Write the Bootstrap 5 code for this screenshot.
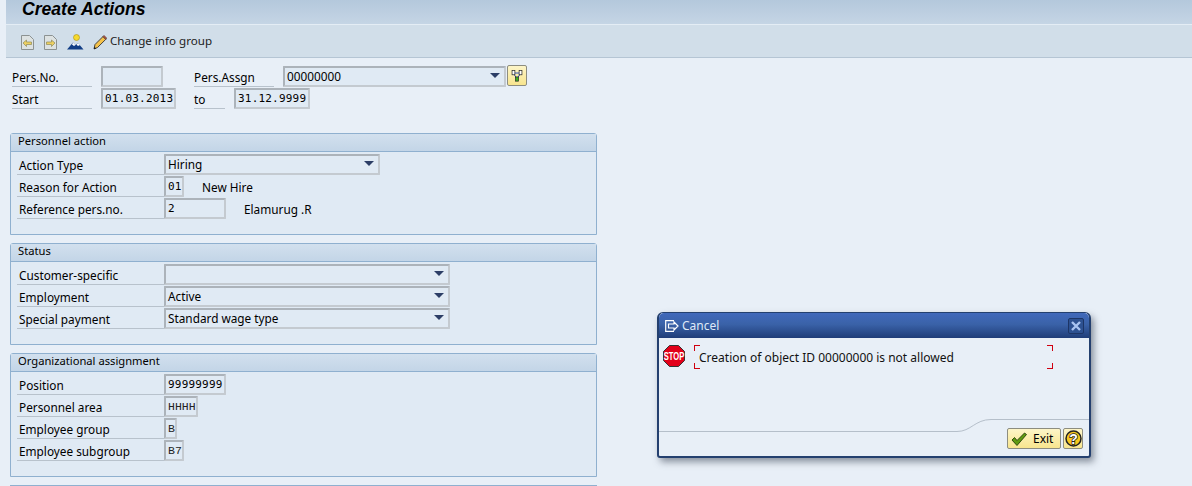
<!DOCTYPE html>
<html lang="en">
<head>
  <meta charset="UTF-8" />
  <title>Create Actions</title>
  <link href="https://cdn.jsdelivr.net/npm/bootstrap@5.3.3/dist/css/bootstrap.min.css" rel="stylesheet" />
  <style>
    html, body { height: 486px; overflow: hidden; }
    body {
      background: #e8eff7;
      color: #000;
      font: 11.8px/14px Tahoma, "Noto Sans", "Liberation Sans", sans-serif;
      position: relative;
    }
    .sap-title {
      height: 25px;
      margin-left: 6px;
      background: linear-gradient(#b4c8dc, #c5d5e5);
      border-bottom: 1px solid #e4edf5;
    }
    .sap-title h1 {
      font: italic bold 17.6px/18px "Liberation Sans", Arial, sans-serif;
      margin: 0 0 0 16px;
    }
    .sap-toolbar {
      height: 33px;
      margin-left: 6px;
      background: #d1dee9;
      border-bottom: 1px solid #b5c5d4;
      padding: 2px 0 0 15px;
      gap: 10px;
    }
    .tool-pencil { margin-left: -1px; }
    .tool-text { margin: 0 0 2px -7px; font-size: 11.6px; color: #1c1c1c; }
    .sap-head { padding: 8px 0 0 12px; height: 75px; }
    .sap-row { height: 22px; }
    .sap-label {
      height: 21px;
      border-bottom: 1px solid #b8c2cc;
      line-height: 23px;
      flex: none;
    }
    .side-text { line-height: 23px; }
    .fld {
      height: 21px;
      flex: none;
      background: #e0eaf4;
      border: 2px solid #acb3ba;
      border-right-color: #c4cad0;
      border-bottom-color: #c4cad0;
      border-radius: 1px;
      font: 11px/17px "DejaVu Sans Mono", "Liberation Mono", monospace;
      padding-left: 2px;
      letter-spacing: .2px;
      white-space: nowrap;
      overflow: hidden;
    }
    .fld-txt { font: 11.8px/17px Tahoma, "Noto Sans", "Liberation Sans", sans-serif; letter-spacing: 0; }
    .fld-serif { font: 11.5px/17px "Liberation Mono", monospace; letter-spacing: 0; color: #222; }
    .fld-drop { position: relative; padding-right: 16px; }
    .fld-drop::after {
      content: "";
      position: absolute;
      right: 4px;
      top: 5px;
      border-left: 5px solid transparent;
      border-right: 5px solid transparent;
      border-top: 5px solid #2c3e66;
    }
    .lw-80 { width: 80px; }
    .lw-pers { width: 80px; margin-left: 31px; }
    .lw-to { width: 31px; margin-left: 18px; }
    .fw-13 { width: 13px; }
    .fw-20 { width: 20px; }
    .fw-34 { width: 34px; }
    .fw-62 { width: 62px; }
    .fw-216 { width: 216px; }
    .fw-286 { width: 286px; }
    .fld-persno { width: 62px; margin-left: 9px; }
    .fld-start { width: 75px; margin-left: 9px; }
    .fld-to { width: 76px; margin-left: 9px; }
    .fld-assgn { width: 223px; margin-left: 9px; }
    .txt-hire { margin-left: 18px; }
    .txt-name { margin-left: 18px; }
    .btn-tree {
      width: 20px;
      height: 23px;
      margin: -1px 0 0 1px;
      padding: 0;
    }
    .sap-group {
      width: 587px;
      margin-left: 10px;
      background: #e0eaf4;
      border: 1px solid #8fb0cf;
      border-radius: 3px 3px 0 0;
      margin-bottom: 8px;
    }
    .sap-group-head {
      height: 18px;
      background: linear-gradient(#d2e0ee, #c3d5e7);
      border-bottom: 1px solid #8fb0cf;
      padding-left: 7px;
      line-height: 14px;
      font-size: 11.2px;
    }
    .sap-group-body { padding: 2px 0 14px 6px; }
    .sap-group-body .sap-label { width: 147px; padding-left: 2px; }
    .w-actions { height: 102px; }
    .w-org { height: 124px; }
    .sap-next {
      height: 3px;
      margin-left: 10px;
      width: 587px;
      background: #c3d5e7;
      border-top: 1px solid #8fb0cf;
    }
    .sap-dialog {
      position: absolute;
      left: 657px;
      top: 312px;
      width: 434px;
      height: 146px;
      background: #e8eff7;
      border: 2px solid #24406f;
      border-top-width: 1px;
      border-radius: 6px 6px 3px 3px;
      box-shadow: 3px 4px 7px rgba(60, 70, 85, .55);
      font-size: 12px;
    }
    .sap-dialog-title {
      height: 25px;
      background: linear-gradient(#4169bb, #3a62a8 45%, #1f3d78);
      border-radius: 5px 5px 0 0;
      color: #dfe9f8;
      padding-left: 6px;
      gap: 3px;
      font-size: 12px;
    }
    .dlg-close {
      margin-left: auto;
      margin-right: 5px;
      width: 16px;
      height: 16px;
      background: #2d5191;
      border: 1px solid #1d3566;
      border-radius: 2px;
    }
    .msg-area { padding: 7px 0 0 4px; height: 60px; }
    .msg-box {
      position: relative;
      margin-left: 9px;
      width: 359px;
      height: 24px;
      padding-left: 5px;
      line-height: 25px;
      color: #111;
    }
    .brk { position: absolute; width: 6px; height: 6px; border: 0 solid #d00010; }
    .brk-tl { left: 0; top: 0; border-width: 1px 0 0 1px; }
    .brk-bl { left: 0; bottom: 0; border-width: 0 0 1px 1px; }
    .brk-tr { right: 0; top: 0; border-width: 1px 1px 0 0; }
    .brk-br { right: 0; bottom: 0; border-width: 0 1px 1px 0; }
    .dlg-curve { position: absolute; left: 0; top: 105px; }
    .dlg-btns { position: absolute; right: 6px; bottom: 7px; gap: 2px; }
    .sap-btn {
      height: 21px;
      background: linear-gradient(#fdf5c8, #f8e58e);
      border: 1px solid #8d8d80;
      border-radius: 2px;
      padding: 0 3px;
    }
    .btn-exit { width: 54px; gap: 6px; }
    .btn-help { width: 20px; padding: 0; justify-content: center; }
  </style>
</head>
<body>

<div class="sap-title"><h1>Create Actions</h1></div>

<div class="sap-toolbar d-flex align-items-center">
  <svg width="13" height="15" viewBox="0 0 13 15"><path d="M.5.5H8.500L12.500 4.500V14.500H.5Z" fill="#dde2e2" stroke="#8c9292"/><path d="M2 8l3.500-3V7h5v2.500h-5V11.500Z" fill="#eed060" stroke="#8e8a58" stroke-width=".7"/></svg>
  <svg width="13" height="15" viewBox="0 0 13 15"><path d="M.5.5H8.500L12.500 4.500V14.500H.5Z" fill="#dde2e2" stroke="#8c9292"/><path d="M11 8 7.500 5V7h-5v2.500h5V11.500Z" fill="#eed060" stroke="#8e8a58" stroke-width=".7"/></svg>
  <svg width="17" height="16" viewBox="0 0 17 16"><circle cx="9.500" cy="3.500" r="3" fill="#f6d92e" stroke="#a88f12" stroke-width=".6"/><path d="M0 15.500 6 8.500 8.500 11 11 9 16.500 15.500Z" fill="#123e86"/><path d="M6 8.500 8.500 11 7 12 5 10.500ZM11 9 13 11 11 12 9.500 10.500Z" fill="#fff"/></svg>
  <svg class="tool-pencil" width="14" height="16" viewBox="0 0 14 16"><path d="M1 15 2 10.500 10 2.500 12.800 5.300 4.500 13.500Z" fill="#f5c24a" stroke="#333" stroke-width=".9"/><path d="M10 2.500 11 1.500 13.800 4.300 12.800 5.300Z" fill="#e0533a" stroke="#333" stroke-width=".7"/><path d="M1 15 1.500 12.800 3 14.400Z" fill="#111"/></svg>
  <span class="tool-text">Change info group</span>
</div>

<div class="sap-head">
  <div class="sap-row d-flex">
    <span class="sap-label lw-80">Pers.No.</span>
    <div class="fld fld-persno"></div>
    <span class="sap-label lw-pers">Pers.Assgn</span>
    <div class="fld fld-txt fld-drop fld-assgn">00000000</div>
    <div class="sap-btn btn-tree d-flex align-items-center justify-content-center">
      <svg width="17" height="17" viewBox="0 0 17 17"><path d="M3 5H14L8.500 13Z" fill="none" stroke="#1a3fc4" stroke-width="1.300"/><rect x="1.500" y="1.500" width="4" height="6" fill="#fff" stroke="#222"/><rect x="11.500" y="1.500" width="4" height="6" fill="#fff" stroke="#222"/><rect x="6.500" y="10.500" width="4" height="6" fill="#3bb020" stroke="#222"/></svg>
    </div>
  </div>
  <div class="sap-row d-flex">
    <span class="sap-label lw-80">Start</span>
    <div class="fld fld-start">01.03.2013</div>
    <span class="sap-label lw-to">to</span>
    <div class="fld fld-to">31.12.9999</div>
  </div>
</div>

<div class="sap-group w-actions">
  <div class="sap-group-head">Personnel action</div>
  <div class="sap-group-body">
    <div class="sap-row d-flex"><span class="sap-label">Action Type</span><div class="fld fld-txt fld-drop fw-216">Hiring</div></div>
    <div class="sap-row d-flex"><span class="sap-label">Reason for Action</span><div class="fld fw-20">01</div><span class="side-text txt-hire">New Hire</span></div>
    <div class="sap-row d-flex"><span class="sap-label">Reference pers.no.</span><div class="fld fw-62">2</div><span class="side-text txt-name">Elamurug .R</span></div>
  </div>
</div>

<div class="sap-group w-actions">
  <div class="sap-group-head">Status</div>
  <div class="sap-group-body">
    <div class="sap-row d-flex"><span class="sap-label">Customer-specific</span><div class="fld fld-txt fld-drop fw-286"></div></div>
    <div class="sap-row d-flex"><span class="sap-label">Employment</span><div class="fld fld-txt fld-drop fw-286">Active</div></div>
    <div class="sap-row d-flex"><span class="sap-label">Special payment</span><div class="fld fld-txt fld-drop fw-286">Standard wage type</div></div>
  </div>
</div>

<div class="sap-group w-org">
  <div class="sap-group-head">Organizational assignment</div>
  <div class="sap-group-body">
    <div class="sap-row d-flex"><span class="sap-label">Position</span><div class="fld fw-62">99999999</div></div>
    <div class="sap-row d-flex"><span class="sap-label">Personnel area</span><div class="fld fld-serif fw-34">HHHH</div></div>
    <div class="sap-row d-flex"><span class="sap-label">Employee group</span><div class="fld fld-serif fw-13">B</div></div>
    <div class="sap-row d-flex"><span class="sap-label">Employee subgroup</span><div class="fld fld-serif fw-20">B7</div></div>
  </div>
</div>

<div class="sap-next"></div>

<div class="sap-dialog">
  <div class="sap-dialog-title d-flex align-items-center">
    <svg width="14" height="12" viewBox="0 0 14 12"><path d="M9 .7H.7V11.300H9M3.500 4H9V2L13 6 9 10V8H3.500Z" fill="none" stroke="#fff" stroke-width="1.200"/></svg>
    <span>Cancel</span>
    <div class="dlg-close d-flex align-items-center justify-content-center">
      <svg width="10" height="10" viewBox="0 0 10 10"><path d="M1 1 9 9M9 1 1 9" stroke="#a9c4f2" stroke-width="2.400"/></svg>
    </div>
  </div>
  <div class="msg-area d-flex align-items-start">
    <svg width="22" height="22" viewBox="0 0 22 22" class="flex-shrink-0"><path d="M6.500.5H15.500L21.500 6.500V15.500L15.500 21.500H6.500L.5 15.500V6.500Z" fill="#e2001a" stroke="#333"/><text transform="translate(11 15) scale(.95 1.350)" font-family="Liberation Sans, sans-serif" font-size="8" font-weight="bold" fill="#fff" text-anchor="middle">STOP</text></svg>
    <div class="msg-box">
      <span class="brk brk-tl"></span><span class="brk brk-bl"></span><span class="brk brk-tr"></span><span class="brk brk-br"></span>
      Creation of object ID 00000000 is not allowed
    </div>
  </div>
  <svg class="dlg-curve" width="430" height="16" viewBox="0 0 430 16"><path d="M0 13.500H298C312 13.500 316 1.500 332 1.500H430" fill="none" stroke="#b5bfca" stroke-width="1"/></svg>
  <div class="dlg-btns d-flex">
    <div class="sap-btn btn-exit d-flex align-items-center">
      <svg width="16" height="14" viewBox="0 0 16 14"><path d="M1 8 3.500 5.500 6 8.500 13.500 1 15.500 2.500 6 13.500Z" fill="#5f9a10" stroke="#24400a" stroke-width=".9"/></svg>
      <span>Exit</span>
    </div>
    <div class="sap-btn btn-help d-flex align-items-center">
      <svg width="17" height="17" viewBox="0 0 17 17"><circle cx="8.500" cy="8.500" r="7.500" fill="#f7c81e" stroke="#222" stroke-width="1.500"/><text x="8.500" y="13.500" font-family="Liberation Sans, sans-serif" font-size="14" font-weight="bold" fill="#fff" stroke="#222" stroke-width="1.500" paint-order="stroke" text-anchor="middle">?</text></svg>
    </div>
  </div>
</div>

<script src="https://cdn.jsdelivr.net/npm/bootstrap@5.3.3/dist/js/bootstrap.bundle.min.js"></script>
</body>
</html>
